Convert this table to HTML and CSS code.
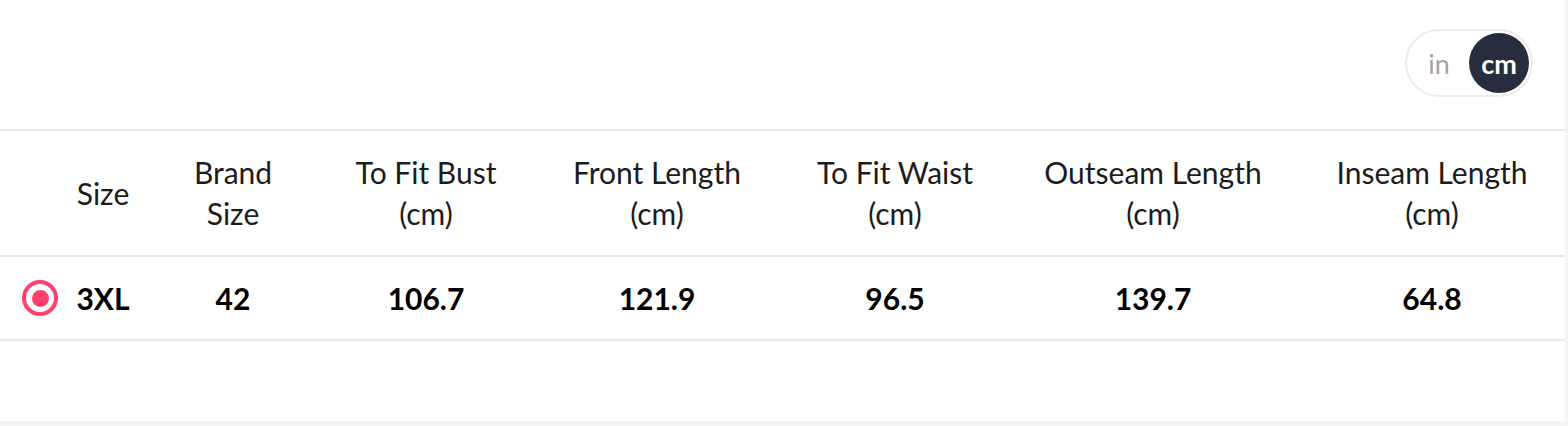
FILE: index.html
```html
<!DOCTYPE html>
<html>
<head>
<meta charset="utf-8">
<link rel="stylesheet" href="styles.css">
</head>
<body>
<div class="card">
  <div class="toolbar">
    <div class="unit-toggle">
      <span class="unit">in</span>
      <span class="unit active">cm</span>
    </div>
  </div>
  <div class="size-table">
    <div class="row head">
      <div class="cell sel"></div>
      <div class="cell">Size</div>
      <div class="cell">Brand<br>Size</div>
      <div class="cell">To Fit Bust<br>(cm)</div>
      <div class="cell">Front Length<br>(cm)</div>
      <div class="cell">To Fit Waist<br>(cm)</div>
      <div class="cell">Outseam Length<br>(cm)</div>
      <div class="cell">Inseam Length<br>(cm)</div>
    </div>
    <div class="row body">
      <div class="cell sel"><span class="radio"></span></div>
      <div class="cell">3XL</div>
      <div class="cell">42</div>
      <div class="cell">106.7</div>
      <div class="cell">121.9</div>
      <div class="cell">96.5</div>
      <div class="cell">139.7</div>
      <div class="cell">64.8</div>
    </div>
  </div>
</div>
</body>
</html>
```

FILE: styles.css
```css
html, body {
  margin: 0;
  padding: 0;
}
body {
  background: #f4f4f5;
  font-family: Lato, "Liberation Sans", sans-serif;
  color: #1c1c1c;
}
.card {
  width: 1565px;
  height: 421px;
  background: #fff;
}
.toolbar {
  height: 129px;
  display: flex;
  justify-content: flex-end;
  align-items: flex-start;
  padding-right: 32px;
  box-sizing: border-box;
  padding-top: 29px;
}
.unit-toggle {
  display: flex;
  align-items: center;
  border: 2px solid #ececec;
  border-radius: 40px;
  padding: 2px;
}
.unit {
  width: 60px;
  height: 60px;
  border-radius: 50%;
  display: flex;
  align-items: center;
  justify-content: center;
  font-size: 27px;
  color: #a3a3a3;
}
.unit.active {
  background: #282c3f;
  color: #fff;
  font-weight: 700;
}
.size-table {
  border-top: 2px solid #e9e9e9;
}
.row {
  display: grid;
  grid-template-columns: 68px 70px 190px 196px 266px 210px 306px 252px;
  align-items: center;
  border-bottom: 2px solid #e9e9e9;
}
.row.head {
  height: 124px;
  font-size: 30px;
  line-height: 41px;
}
.row.body {
  height: 82px;
  font-size: 30px;
  font-weight: 700;
  color: #000;
}
.cell {
  text-align: center;
  white-space: nowrap;
}
.cell.sel {
  display: flex;
  justify-content: flex-start;
  padding-left: 22px;
}
.radio {
  width: 36px;
  height: 36px;
  box-sizing: border-box;
  border: 4px solid #ff3f6c;
  border-radius: 50%;
  display: flex;
  align-items: center;
  justify-content: center;
}
.radio::after {
  content: "";
  width: 17px;
  height: 17px;
  border-radius: 50%;
  background: #ff3f6c;
}
```
